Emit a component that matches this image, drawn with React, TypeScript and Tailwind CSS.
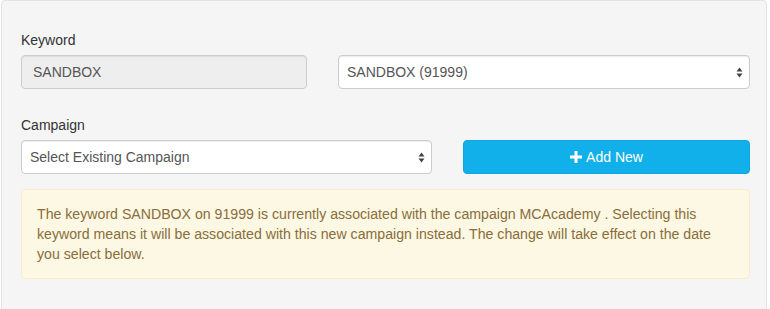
import React from "react";

function Caret() {
  return (
    <svg width="7" height="11" viewBox="0 0 7 11" className="shrink-0">
      <path d="M3.5 0.5 L6.5 4.5 L0.5 4.5 Z" fill="#444" />
      <path d="M0.5 6.5 L6.5 6.5 L3.5 10.5 Z" fill="#444" />
    </svg>
  );
}

function Select({ text, width }: { text: string; width: string }) {
  return (
    <div
      className={`${width} h-[34px] bg-white border border-[#ccc] rounded-[4px] flex items-center justify-between pl-[8px] pr-[6px] text-[14px] text-[#555] shadow-[inset_0_1px_1px_rgba(0,0,0,0.075)]`}
    >
      <span>{text}</span>
      <Caret />
    </div>
  );
}

export default function App() {
  return (
    <div className="w-[770px] h-[309px] bg-white overflow-hidden" style={{ fontFamily: '"Liberation Sans", Arial, sans-serif' }}>
      <div className="ml-[1px] w-[766px] h-[330px] bg-[#f5f5f5] border border-[#e3e3e3] rounded-[4px] pt-[29px] pl-[19px] pr-[16px] text-[14px] leading-[20px] text-[#333]">
        <div className="mb-[5px]">Keyword</div>
        <div className="flex gap-[31px]">
          <div className="w-[286px] h-[34px] bg-[#eee] border border-[#ccc] rounded-[4px] flex items-center px-[11px] text-[#555] shadow-[inset_0_1px_1px_rgba(0,0,0,0.075)]">
            SANDBOX
          </div>
          <Select text="SANDBOX (91999)" width="w-[412px]" />
        </div>
        <div className="mt-[26px] mb-[5px]">Campaign</div>
        <div className="flex gap-[31px] items-center">
          <Select text="Select Existing Campaign" width="w-[411px]" />
          <div className="w-[287px] h-[34px] -mt-[1px] bg-[#12b0ea] border border-[#0fa6de] rounded-[4px] flex items-center justify-center text-white gap-[4px]">
            <svg width="12" height="12" viewBox="0 0 12 12">
              <path d="M4.5 0 H7.5 V4.5 H12 V7.5 H7.5 V12 H4.5 V7.5 H0 V4.5 H4.5 Z" fill="#fff" />
            </svg>
            <span>Add New</span>
          </div>
        </div>
        <div className="mt-[15px] w-[729px] bg-[#fcf8e3] border border-[#faebcc] rounded-[4px] px-[15px] py-[14px] text-[14.15px] text-[#8a6d3b]">
          The keyword SANDBOX on 91999 is currently associated with the campaign MCAcademy . Selecting this keyword means it will be associated with this new campaign instead. The change will take effect on the date you select below.
        </div>
      </div>
    </div>
  );
}
